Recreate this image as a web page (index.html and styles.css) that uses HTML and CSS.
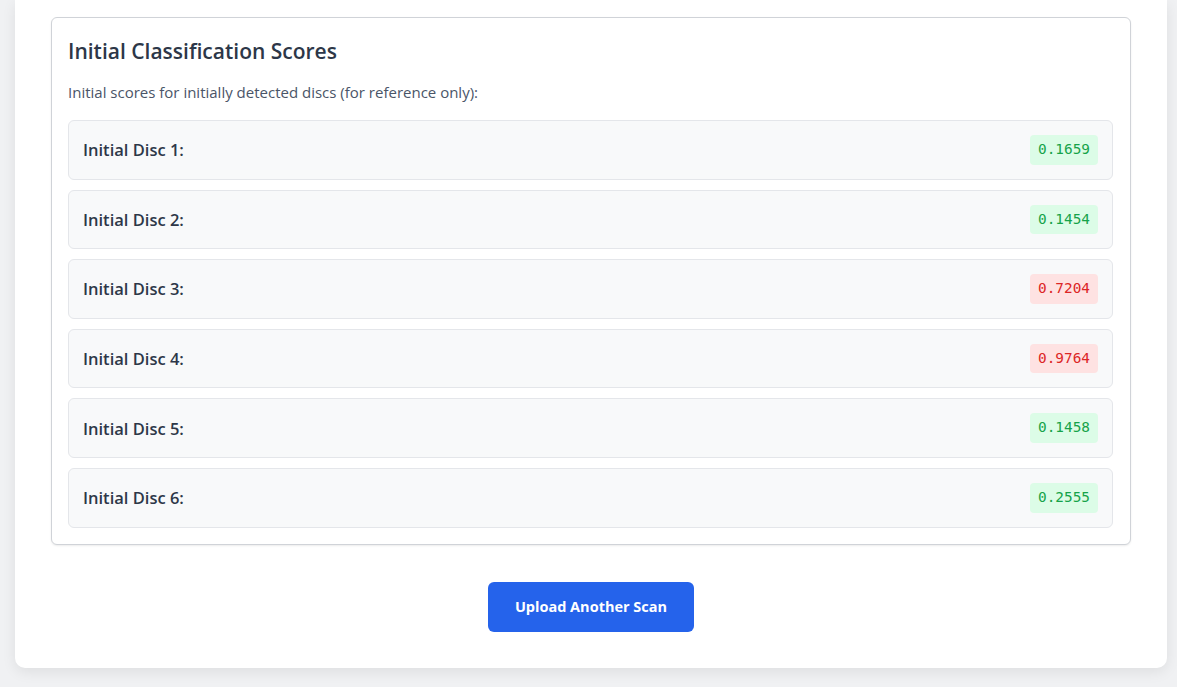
FILE: index.html
```html
<!DOCTYPE html>
<html lang="en">
<head>
<meta charset="utf-8">
<title>Initial Classification Scores</title>
<link rel="stylesheet" href="styles.css">
</head>
<body>
<div class="page">
  <main class="result-card">
    <section class="scores-card">
      <h3 class="scores-title">Initial Classification Scores</h3>
      <p class="scores-note">Initial scores for initially detected discs (for reference only):</p>
      <div class="score-list">
        <div class="score-row"><span class="score-label">Initial Disc 1:</span><span class="badge badge-ok">0.1659</span></div>
        <div class="score-row"><span class="score-label">Initial Disc 2:</span><span class="badge badge-ok">0.1454</span></div>
        <div class="score-row"><span class="score-label">Initial Disc 3:</span><span class="badge badge-bad">0.7204</span></div>
        <div class="score-row"><span class="score-label">Initial Disc 4:</span><span class="badge badge-bad">0.9764</span></div>
        <div class="score-row"><span class="score-label">Initial Disc 5:</span><span class="badge badge-ok">0.1458</span></div>
        <div class="score-row"><span class="score-label">Initial Disc 6:</span><span class="badge badge-ok">0.2555</span></div>
      </div>
    </section>
    <div class="actions">
      <button class="upload-btn" type="button">Upload Another Scan</button>
    </div>
  </main>
</div>
</body>
</html>
```

FILE: styles.css
```css
* { box-sizing: border-box; }

html, body {
  margin: 0;
  padding: 0;
  background: #f0f1f3;
  font-family: "Open Sans", "Noto Sans", "Liberation Sans", sans-serif;
  color: #2d3748;
}

.page {
  padding: 0 10px 19px 15px;
}

.result-card {
  width: 1152px;
  background: #ffffff;
  border-radius: 0 0 10px 10px;
  box-shadow: 0 4px 14px rgba(0, 0, 0, 0.08);
  padding: 17px 36px 36px;
}

.scores-card {
  border: 1px solid #d0d3d8;
  border-radius: 6px;
  box-shadow: 0 1px 2px rgba(0, 0, 0, 0.08);
  padding: 16px 17px 16px 16px;
  background: #ffffff;
}

.scores-title {
  margin: 0;
  font-size: 21px;
  line-height: 34px;
  font-weight: 600;
  color: #2d3748;
}

.scores-note {
  margin: 13px 0 17px;
  font-size: 15px;
  line-height: 22px;
  color: #4a5568;
}

.score-list {
  display: flex;
  flex-direction: column;
  gap: 10px;
}

.score-row {
  display: flex;
  justify-content: space-between;
  align-items: center;
  background: #f8f9fa;
  border: 1px solid #e4e6ea;
  border-radius: 6px;
  padding: 14px;
}

.score-label {
  font-size: 16.5px;
  font-weight: 600;
  color: #2d3748;
}

.badge {
  font-family: "DejaVu Sans Mono", "Liberation Mono", monospace;
  font-size: 14.4px;
  line-height: 21.6px;
  padding: 4px 8px;
  border-radius: 4px;
}

.badge-ok {
  background: #dcfce7;
  color: #16a34a;
}

.badge-bad {
  background: #fee2e2;
  color: #dc2626;
}

.actions {
  display: flex;
  justify-content: center;
  margin-top: 37px;
}

.upload-btn {
  font-family: inherit;
  font-size: 14.5px;
  font-weight: 700;
  color: #ffffff;
  background: #2563eb;
  border: none;
  border-radius: 6px;
  width: 206px;
  height: 50px;
  cursor: pointer;
}
```
